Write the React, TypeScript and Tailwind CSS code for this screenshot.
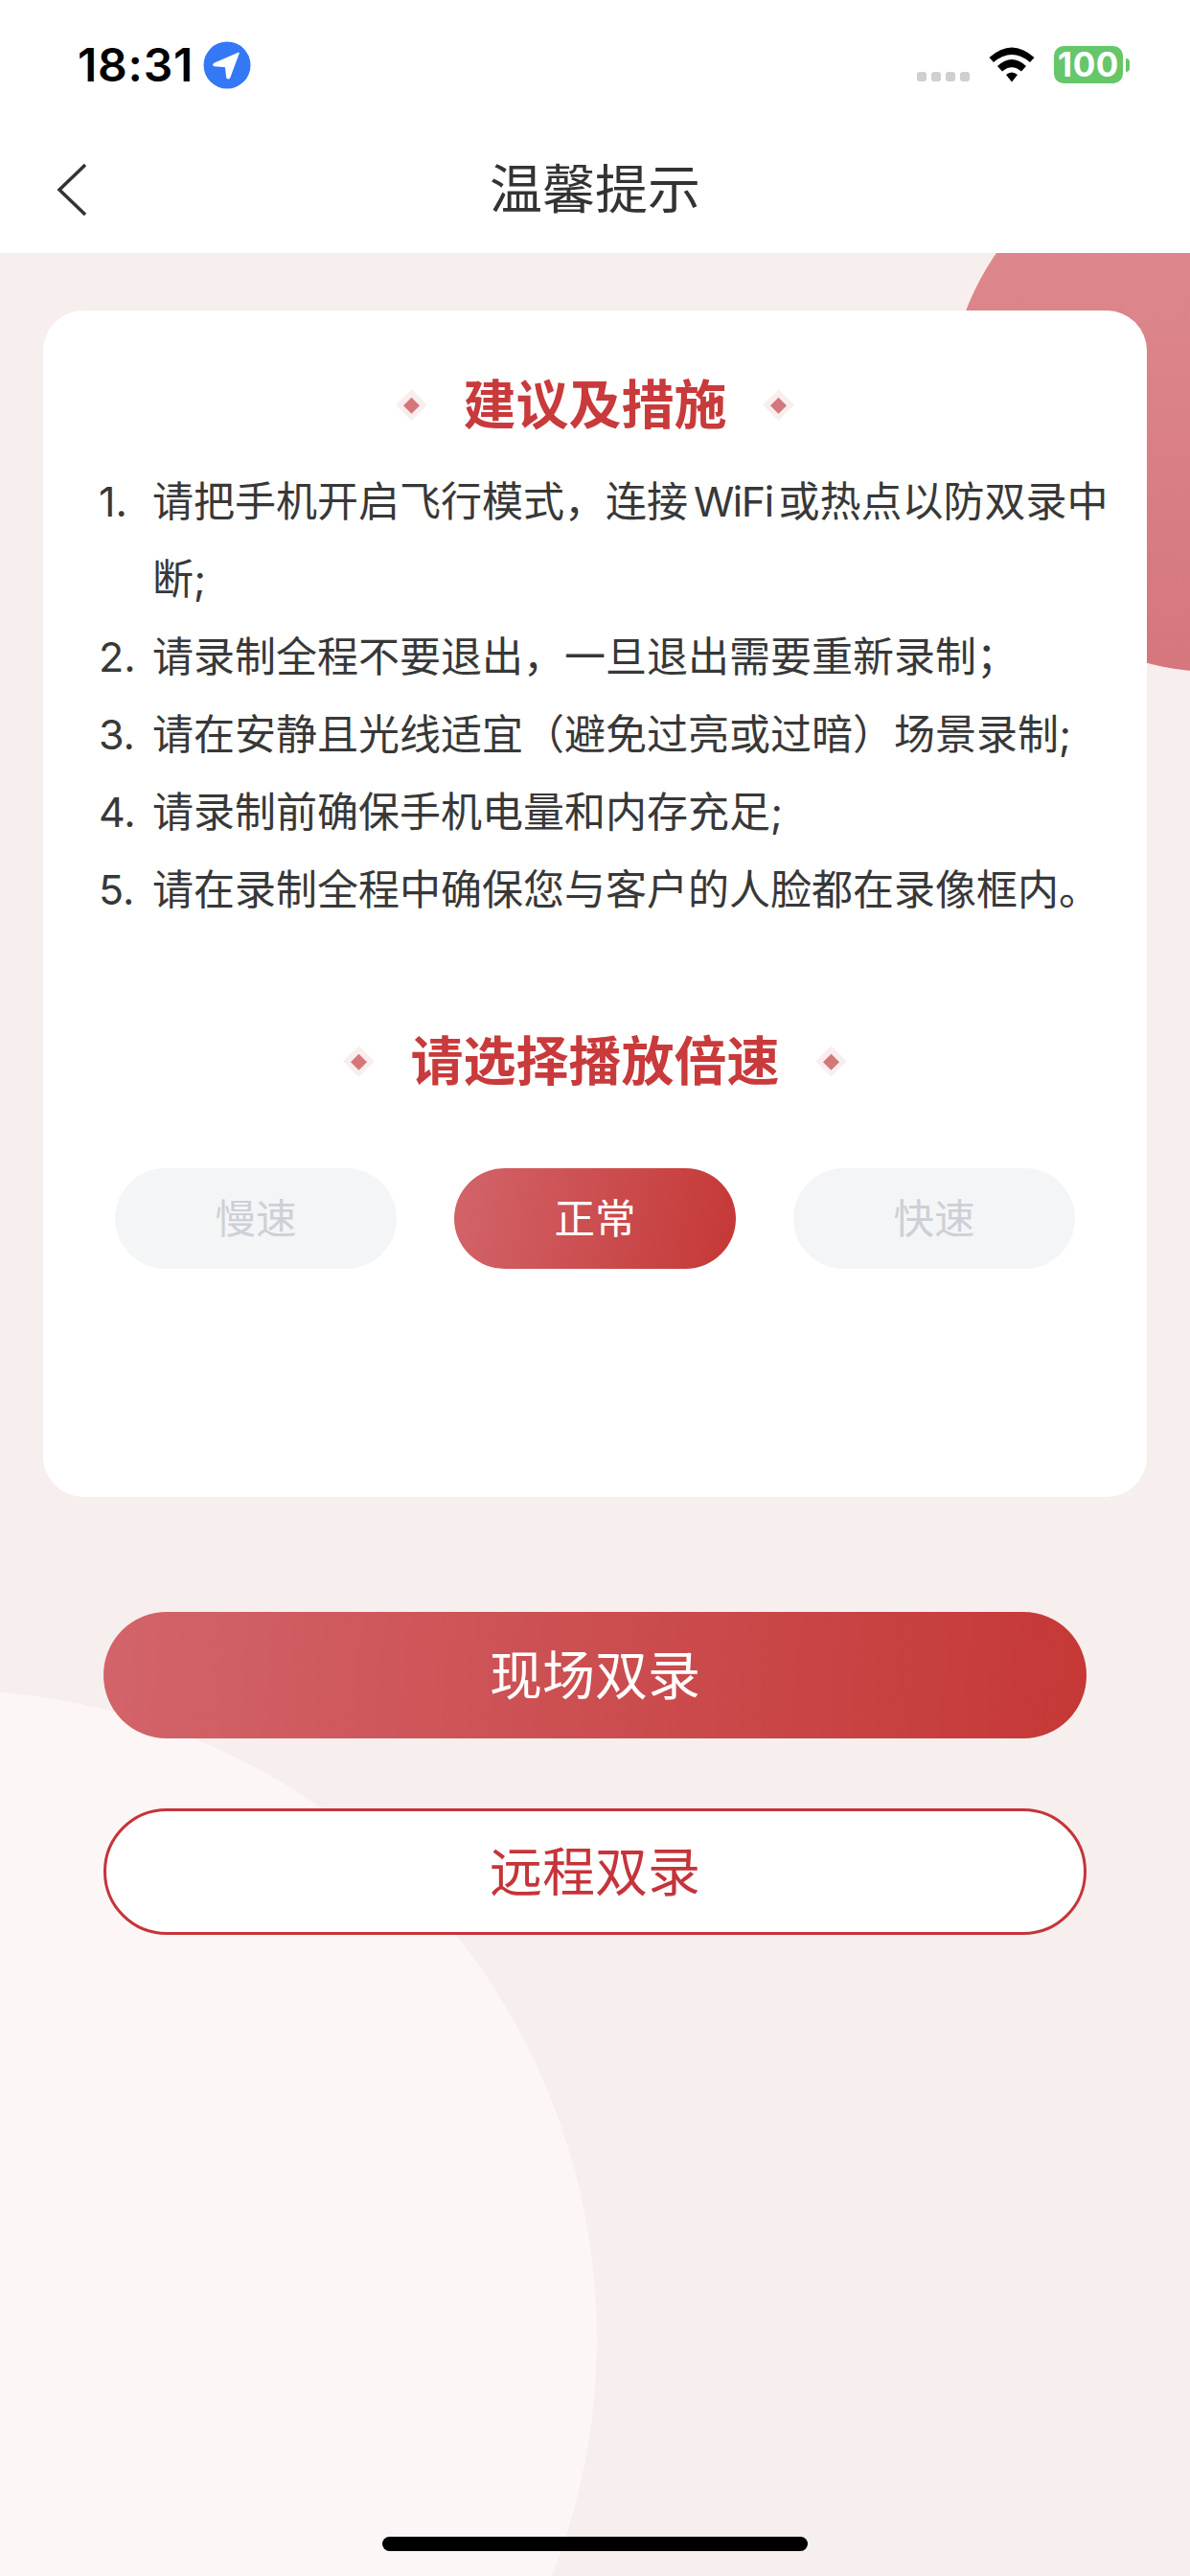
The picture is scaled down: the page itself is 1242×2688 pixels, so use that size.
import React from "react";

const CJK = "font-['Inter','Noto_Sans_CJK_SC',sans-serif]";

function Diamond() {
  return (
    <span className="flex h-[23px] w-[23px] rotate-45 items-center justify-center bg-[#f8eeee]">
      <span className="h-[12px] w-[12px] bg-[#d4777b]" />
    </span>
  );
}

function SectionTitle({ text }: { text: string }) {
  return (
    <div className="flex items-center justify-center gap-[42px]">
      <Diamond />
      <h2 className="text-[55px] leading-[70px] font-bold text-[#c83a3b]">{text}</h2>
      <Diamond />
    </div>
  );
}

const tips: React.ReactNode[] = [
  <>
    请把手机开启飞行模式，连接<span className="mx-[6px] tracking-[-1.5px]">WiFi</span>或热点以防双录中断;
  </>,
  "请录制全程不要退出，一旦退出需要重新录制；",
  "请在安静且光线适宜（避免过亮或过暗）场景录制;",
  "请录制前确保手机电量和内存充足;",
  "请在录制全程中确保您与客户的人脸都在录像框内。",
];

function StatusBar() {
  return (
    <div className="flex h-[132px] items-start justify-between bg-white pt-[43px] pr-[63px] pl-[81px]">
      <div className="flex items-center gap-[10px]">
        <span className="font-['Inter'] text-[48px] leading-[50px] font-semibold tracking-[0.8px] text-black">18:31</span>
        <svg width="50" height="50" viewBox="0 0 50 50">
          <circle cx="25" cy="25" r="24.5" fill="#3478f6" />
          <path d="M37 12.5 L11.5 23.5 Q10 25 12 25.5 L23.5 26.5 L25 38 Q26 39.5 27.5 38 Z" fill="#fff" stroke="#fff" strokeWidth="1.5" strokeLinejoin="round" />
        </svg>
      </div>
      <div className="flex items-start">
        <div className="mt-[32px] flex gap-[5px]">
          <span className="h-[10px] w-[10px] rounded-[3px] bg-[#cfcfcf]" />
          <span className="h-[10px] w-[10px] rounded-[3px] bg-[#cfcfcf]" />
          <span className="h-[10px] w-[10px] rounded-[3px] bg-[#cfcfcf]" />
          <span className="h-[10px] w-[10px] rounded-[3px] bg-[#cfcfcf]" />
        </div>
        <svg width="48" height="37" viewBox="0 0 48 37" className="mt-[6px] ml-[20px]">
          <path d="M0.5 11 Q24 -10 47.5 11 L43 16 Q24 0 5 16 Z" fill="#000" />
          <path d="M9 20 Q24 6 39 20 L34 25.5 Q24 17 14 25.5 Z" fill="#000" />
          <path d="M18 29 Q24 24 30 29 L24 36.5 Z" fill="#000" />
        </svg>
        <div className="mt-[5px] ml-[20px] flex items-center">
          <span className="flex h-[39px] w-[72px] items-center justify-center rounded-[10px] bg-[#66c66a] font-['Inter'] text-[35px] leading-none font-bold tracking-[0.5px] text-white">
            100
          </span>
          <span className="ml-[3px] h-[14px] w-[4px] rounded-r-[4px] bg-[#66c66a]" />
        </div>
      </div>
    </div>
  );
}

function NavBar() {
  return (
    <div className="relative flex h-[132px] items-start justify-center bg-white pt-[30px]">
      <svg width="34" height="56" viewBox="0 0 34 56" className="absolute top-[38px] left-[58px]" fill="none">
        <path d="M31 2 L4 28 L31 54" stroke="#333" strokeWidth="3.5" />
      </svg>
      <h1 className="text-[55px] leading-[70px] font-normal text-[#333]">温馨提示</h1>
    </div>
  );
}

export default function App() {
  return (
    <div className={`relative h-[2688px] w-[1242px] overflow-hidden bg-[#f7eeee] ${CJK}`}>
      {/* decorative background discs */}
      <div className="absolute top-[145px] left-[990px] h-[556px] w-[556px] rounded-full bg-gradient-to-b from-[#de8c90] to-[#d6767d]" />
      <div className="absolute top-[1764px] left-[-729px] h-[1352px] w-[1352px] rounded-full bg-[#fcf7f6]" />

      <div className="relative flex flex-col">
        <StatusBar />
        <NavBar />

        <section className="mx-[45px] mt-[60px] h-[1238px] rounded-[42px] bg-white pt-[63px]">
          <SectionTitle text="建议及措施" />
          <ol className="mt-[26px] pr-[20px] pl-[58px] text-[43px] leading-[81px] text-[#383838]">
            {tips.map((tip, i) => (
              <li key={i} className="flex">
                <span className="w-[56px] shrink-0">{i + 1}.</span>
                <span>{tip}</span>
              </li>
            ))}
          </ol>

          <div className="mt-[103px]">
            <SectionTitle text="请选择播放倍速" />
          </div>

          <div className="mt-[77px] flex justify-center gap-[60px] text-[42.5px]">
            <button className="h-[105px] w-[294px] rounded-full bg-[#f4f5f7] text-[#cdd0d6]">慢速</button>
            <button className="h-[105px] w-[294px] rounded-full bg-[linear-gradient(100deg,#d2646a,#c53836)] text-white">正常</button>
            <button className="h-[105px] w-[294px] rounded-full bg-[#f4f5f7] text-[#cdd0d6]">快速</button>
          </div>
        </section>

        <div className="mx-[108px] mt-[120px] flex flex-col gap-[73px] text-[55px]">
          <button className="h-[132px] rounded-full bg-[linear-gradient(95deg,#d2646a,#c53836)] text-white">现场双录</button>
          <button className="h-[132px] rounded-full border-[3px] border-[#c5343a] bg-white text-[#c5343a]">远程双录</button>
        </div>
      </div>

      {/* home indicator */}
      <div className="absolute bottom-[26px] left-[399px] h-[15px] w-[444px] rounded-full bg-black" />
    </div>
  );
}
